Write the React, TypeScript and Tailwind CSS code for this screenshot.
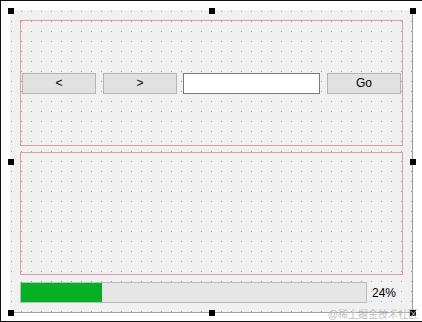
import React from "react";

const handles = [
  "left-[7px] top-[7px]",
  "left-[208px] top-[7px]",
  "left-[409px] top-[7px]",
  "left-[7px] top-[158px]",
  "left-[409px] top-[158px]",
  "left-[7px] top-[309px]",
  "left-[208px] top-[309px]",
  "left-[409px] top-[309px]",
];

function DotGrid() {
  return (
    <svg className="absolute inset-0 pointer-events-none" width="402" height="302">
      <defs>
        <pattern id="dots" x="1" y="1" width="10" height="10" patternUnits="userSpaceOnUse">
          <rect x="0" y="0" width="1" height="1" fill="#a4a4a4" />
        </pattern>
      </defs>
      <rect width="402" height="302" fill="url(#dots)" />
    </svg>
  );
}

function Btn({ label }: { label: string }) {
  return (
    <button className="w-[74px] h-[21px] bg-[#e1e1e1] border border-[#b4b4b4] text-[12px] text-black flex items-center justify-center">
      {label}
    </button>
  );
}

export default function App() {
  const progress = 24;
  return (
    <div
      className="relative w-[422px] h-[322px] bg-white border-l border-t border-b border-[#111] pt-[9px] pl-[9px]"
      style={{ fontFamily: '"Liberation Sans", Arial, sans-serif' }}
    >
      <div className="relative w-[403px] h-[303px] bg-[#f0f0f0] border-r border-b border-[#a0a0a0]">
        <DotGrid />
        <div className="relative flex flex-col pt-[10px] pl-[10px]">
          <div className="w-[383px] h-[126px] border border-[#d8a0a4] flex items-center px-[1px] gap-[7px]">
            <Btn label="<" />
            <Btn label=">" />
            <input
              className="w-[137px] h-[21px] bg-white border border-[#7a7a7a] -ml-[1px] outline-none"
              defaultValue=""
            />
            <Btn label="Go" />
          </div>
          <div className="w-[383px] h-[123px] mt-[6px] border border-[#d8a0a4]" />
          <div className="flex items-center mt-[7px] h-[21px]">
            <div className="w-[347px] h-[21px] bg-[#e6e6e6] border border-[#bcbcbc]">
              <div className="h-full bg-[#06b025]" style={{ width: `${progress * 3.38}px` }} />
            </div>
            <span className="ml-[5px] text-[12px] text-black">{progress}%</span>
          </div>
        </div>
      </div>
      {handles.map((h) => (
        <div key={h} className={`absolute w-[6px] h-[6px] bg-black ${h}`} />
      ))}
      <span
        className="absolute right-[4px] bottom-[1px] text-[10px] text-[#bdbdbd] leading-none"
        style={{ fontFamily: '"Liberation Sans", "Noto Sans CJK SC", sans-serif' }}
      >
        @稀土掘金技术社区
      </span>
    </div>
  );
}
